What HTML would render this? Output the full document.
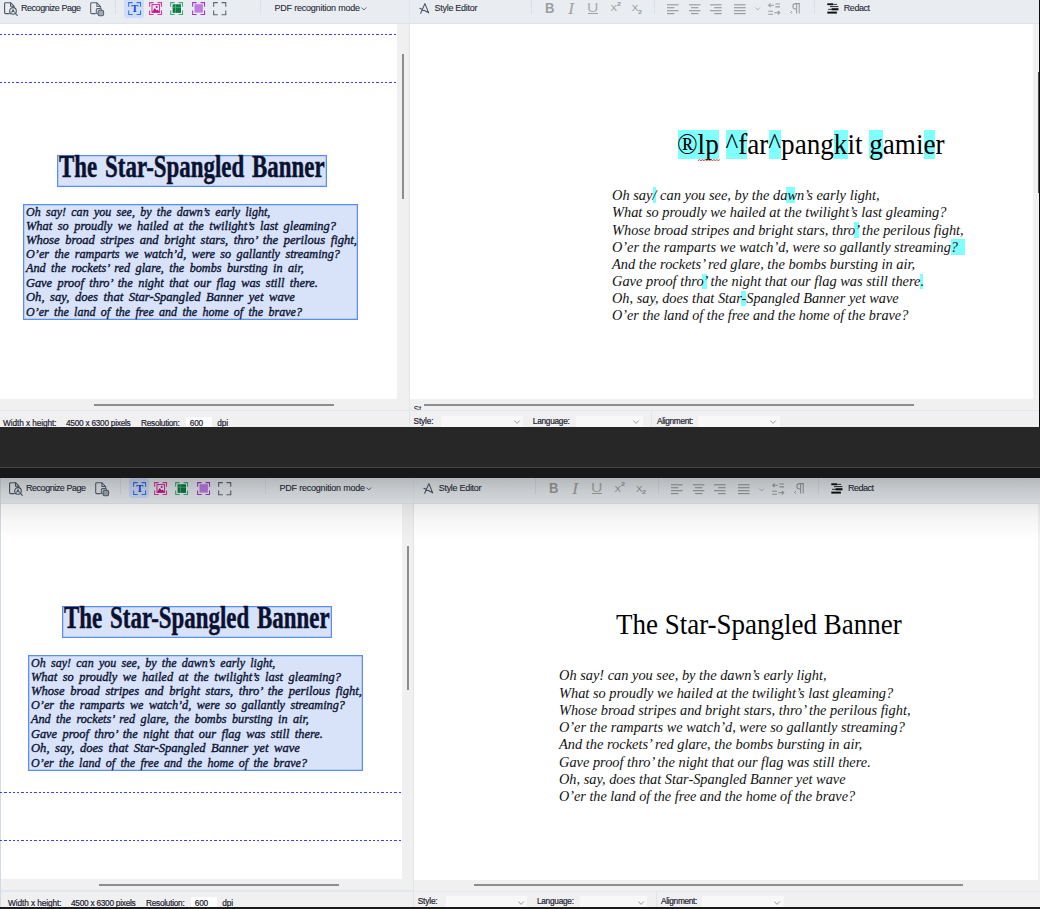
<!DOCTYPE html>
<html lang="en"><head><meta charset="utf-8"><title>OCR Editor</title>
<style>
html,body{margin:0;padding:0}
body{width:1040px;height:909px;position:relative;overflow:hidden;background:#272727;
 font-family:"Liberation Sans",sans-serif}
div,span.t,svg{position:absolute}
svg{overflow:visible;display:block}
.win{overflow:hidden;left:0;width:1040px}
.app{left:0;top:0}
.t{white-space:nowrap;line-height:1;display:block;transform-origin:0 0}
.sans{font-family:"Liberation Sans",sans-serif}
.serif{font-family:"Liberation Serif",serif}
.area{background:#d8e3fa;box-shadow:inset 0 0 0 1.25px #5b8ef0;box-sizing:border-box}
</style></head>
<body>
<div class="win" style="top:0;height:427px;width:1039px">
<div class="app" style="left:0;top:0">
<div style="left:-5px;top:22px;width:402px;height:376.5px;background:#fff;"></div>
<div style="left:397px;top:22px;width:11.7px;height:376.5px;background:#f0f0f0;"></div>
<div style="left:402px;top:54px;width:2.1px;height:144.8px;background:#8d8d8d;"></div>
<div style="left:409.9px;top:22px;width:623.1px;height:377px;background:#fff;"></div>
<div style="left:1033px;top:22px;width:12px;height:377px;background:#f1f1f1;"></div>
<div style="left:-5px;top:398.5px;width:402px;height:30px;background:#f0f0f0;"></div>
<div style="left:397px;top:398.5px;width:12px;height:30px;background:#f0f0f0;"></div>
<div style="left:409.5px;top:399px;width:640px;height:30px;background:#f0f0f0;"></div>
<div style="left:-5px;top:-3px;width:1050px;height:26.4px;background:#e9edf1;"></div>
<div style="left:-5px;top:23.2px;width:1050px;height:1.1px;background:#dfe4ea;"></div>
<div style="left:408.5px;top:-3px;width:1.45px;height:432px;background:#e0e6ed;"></div>
<div style="left:-5px;top:409.9px;width:413.5px;height:1.2px;background:#e2e7ee;"></div>
<div style="left:409.5px;top:410.3px;width:631px;height:1.2px;background:#e2e7ee;"></div>
<div style="left:-5px;top:-3px;width:1.3px;height:432px;background:#d2dae3;"></div>
<div style="left:93.8px;top:403.8px;width:240.2px;height:2px;background:#8d8d8d;"></div>
<div style="left:424.4px;top:403.6px;width:489.4px;height:2px;background:#8d8d8d;"></div>
<div style="left:0;top:0px;width:0;height:0">
<div style="left:124.1px;top:-1.9px;width:19.9px;height:19.9px;background:#cfddf9;border-radius:3.2px;"></div>
<svg style="left:4px;top:1.9px" width="14.5" height="14" viewBox="0 0 14.5 14" fill="none"><g stroke="#4d5766" stroke-width="1.1" stroke-linecap="round" stroke-linejoin="round"><path d="M5.2 11.6H1.6a1 1 0 0 1-1-1V1.7a1 1 0 0 1 1-1h5L10 4.1v1.3"/><path d="M6.5 .9V4.2H9.8"/><circle cx="9" cy="8.9" r="3.3"/><path d="M11.4 11.4L13.3 13.3"/><path d="M7.7 10.4 9 7.4l1.3 3M8.2 9.5h1.6" stroke-width=".9"/></g></svg>
<svg style="left:90px;top:1.5px" width="14.5" height="15" viewBox="0 0 14.5 15" fill="none"><g stroke="#566070" stroke-width="1.05" stroke-linecap="round" stroke-linejoin="round"><path d="M5.4 11.6H1.7a1 1 0 0 1-1-1V1.7a1 1 0 0 1 1-1h5L10.6 4.6v1.4"/><path d="M6.9 .9V4.5H10.3"/><rect x="6.3" y="6.6" width="5.3" height="5.2" rx="1.3"/><rect x="8.1" y="8.2" width="5.5" height="5.6" rx="1.6" fill="#a3aab4"/></g></svg>
<svg style="left:127.5px;top:2px" width="13.4" height="13.4" viewBox="0 0 13.4 13.4" fill="none"><path d="M0.65 4.65 V0.65 H4.65 M8.55 0.65 H12.55 V4.65 M12.55 8.55 V12.55 H8.55 M4.65 12.55 H0.65 V8.55" stroke="#3572ea" stroke-width="1.05"/><text x="6.7" y="10.4" text-anchor="middle" font-family="Liberation Serif,serif" font-weight="bold" font-size="10.5" fill="#0f45dc">T</text></svg>
<svg style="left:148.8px;top:2px" width="13.4" height="13.4" viewBox="0 0 13.4 13.4" fill="none"><path d="M0.65 4.65 V0.65 H4.65 M8.55 0.65 H12.55 V4.65 M12.55 8.55 V12.55 H8.55 M4.65 12.55 H0.65 V8.55" stroke="#d5389f" stroke-width="1.05"/><rect x="3" y="2.6" width="7.6" height="7.8" stroke="#cf2499" stroke-width="1"/><path d="M3 10.2 5.7 6l2 2.6 1.1-1.1 1.8 2.7z" fill="#c90f94"/><circle cx="7.7" cy="4.9" r="1" fill="#c90f94"/></svg>
<svg style="left:170.3px;top:2px" width="13.4" height="13.4" viewBox="0 0 13.4 13.4" fill="none"><path d="M0.65 4.65 V0.65 H4.65 M8.55 0.65 H12.55 V4.65 M12.55 8.55 V12.55 H8.55 M4.65 12.55 H0.65 V8.55" stroke="#45a97f" stroke-width="1.05"/><rect x="2.6" y="2.3" width="8.4" height="8.6" fill="#0c7b45"/><path d="M5.4 2.3v8.6M2.6 5.3h8.4" stroke="#5fb58e" stroke-width=".8"/></svg>
<svg style="left:191.9px;top:2px" width="13.4" height="13.4" viewBox="0 0 13.4 13.4" fill="none"><path d="M0.65 4.65 V0.65 H4.65 M8.55 0.65 H12.55 V4.65 M12.55 8.55 V12.55 H8.55 M4.65 12.55 H0.65 V8.55" stroke="#a233d3" stroke-width="1.05"/><rect x="2.5" y="2.2" width="8.4" height="8.4" fill="#bf7ce2"/></svg>
<svg style="left:212.9px;top:2px" width="13.6" height="13.4" viewBox="0 0 13.6 13.4" fill="none"><path d="M0.65 4.8500000000000005 V0.65 H4.8500000000000005 M8.55 0.65 H12.75 V4.8500000000000005 M12.75 8.55 V12.75 H8.55 M4.8500000000000005 12.75 H0.65 V8.55" stroke="#5d6573" stroke-width="1.1"/></svg>
<span id="arp" class="t sans" style="left:21px;top:3.53px;font-size:9px;letter-spacing:-0.46px;color:#282a38;-webkit-text-stroke:.1px #282a38;">Recognize Page</span>
<span id="apm" class="t sans" style="left:274.5px;top:3.53px;font-size:9px;letter-spacing:-0.21px;color:#282a38;-webkit-text-stroke:.1px #282a38;">PDF recognition mode</span>
<svg style="left:360.6px;top:7.3px" width="5.6" height="4" viewBox="0 0 5.6 4" fill="none"><path d="M.4 .5 2.8 3 5.2 .5" stroke="#4d5766" stroke-width=".9"/></svg>
<div style="left:115px;top:-3px;width:1px;height:17px;background:#d9dfe8;"></div>
<div style="left:260px;top:-3px;width:1px;height:16.6px;background:#dde2ea;"></div>
</div>
<div style="left:0px;top:0px;width:0;height:0">
<svg style="left:418.5px;top:3px" width="11" height="12" viewBox="0 0 11 12" fill="none"><g stroke="#465060" stroke-width="1.05" stroke-linecap="round" stroke-linejoin="round"><path d="M1.7 10.2 5.9 .6 9.7 9.9M.9 5.2 9.3 9.5"/></g></svg>
<svg style="left:667.3px;top:3.5px" width="12" height="10.5" viewBox="0 0 12 10.5" fill="none"><g stroke="#9b9b9b" stroke-width="1.15"><path d="M0 0.8H11.6"/><path d="M0 3.7H7.4"/><path d="M0 6.7H11.6"/><path d="M0 9.6H7.4"/></g></svg>
<svg style="left:689px;top:3.5px" width="12" height="10.5" viewBox="0 0 12 10.5" fill="none"><g stroke="#9b9b9b" stroke-width="1.15"><path d="M0 0.8H11.4"/><path d="M2 3.7H9.4"/><path d="M0 6.7H11.4"/><path d="M2 9.6H9.4"/></g></svg>
<svg style="left:710.2px;top:3.5px" width="12" height="10.5" viewBox="0 0 12 10.5" fill="none"><g stroke="#9b9b9b" stroke-width="1.15"><path d="M0 0.8H11.6"/><path d="M4.2 3.7H11.6"/><path d="M0 6.7H11.6"/><path d="M4.2 9.6H11.6"/></g></svg>
<svg style="left:733.8px;top:3.5px" width="12" height="10.5" viewBox="0 0 12 10.5" fill="none"><g stroke="#9b9b9b" stroke-width="1.15"><path d="M0 0.8H11.6"/><path d="M0 3.7H11.6"/><path d="M0 6.7H11.6"/><path d="M0 9.6H11.6"/></g></svg>
<svg style="left:755.2px;top:7.4px" width="5.4" height="4" viewBox="0 0 5.4 4" fill="none"><path d="M.4 .5 2.7 3 5 .5" stroke="#a9aeb5" stroke-width=".9"/></svg>
<svg style="left:767.8px;top:2.6px" width="12.4" height="12.6" viewBox="0 0 12.4 12.6" fill="none"><g stroke="#9b9b9b" stroke-width="1.05"><path d="M.6 2.2H6M2.6 .3.7 2.2 2.6 4.1M7.4 1H12M7.4 3.9H12"/><path d="M.2 8.3H5M.2 11.2H5M6.2 9.8H11.8M9.8 7.9 11.8 9.8 9.8 11.7"/></g></svg>
<svg style="left:790.2px;top:2.6px" width="10.6" height="12" viewBox="0 0 10.6 12" fill="none"><g stroke="#9b9b9b" stroke-width="1.05" stroke-linejoin="round"><path d="M9.9 .6H5.6a2.7 2.7 0 0 0 0 5.4H6.4M6.6 .6V10.6M9.2 .6V10.6"/><path d="M2 8 .6 9.4 2 10.8" stroke-width=".9"/></g></svg>
<svg style="left:827.2px;top:3.2px" width="12" height="11" viewBox="0 0 12 11" fill="none"><g fill="#111"><rect x=".3" y=".3" width="5.8" height="1.9"/><rect x="6.1" y=".9" width="4" height=".8"/><rect x="3" y="3.2" width="8.4" height=".9"/><rect x="1" y="5.9" width="4" height=".8"/><rect x="4.6" y="5.2" width="6.9" height="2.1"/><rect x=".3" y="8.6" width="9.6" height="2"/></g></svg>
<span id="ase" class="t sans" style="left:434.6px;top:3.53px;font-size:9px;letter-spacing:-0.29px;color:#282a38;-webkit-text-stroke:.1px #282a38;">Style Editor</span>
<span id="ard" class="t sans" style="left:843.8px;top:3.53px;font-size:9px;letter-spacing:-0.46px;color:#282a38;-webkit-text-stroke:.1px #282a38;">Redact</span>
<div style="left:530.6px;top:-3px;width:1px;height:16.8px;background:#d9dfe8;"></div>
<div style="left:654.2px;top:-3px;width:1px;height:16.8px;background:#d9dfe8;"></div>
<div style="left:813.6px;top:-3px;width:1px;height:16.8px;background:#d9dfe8;"></div>
<span id="afb" class="t sans" style="left:545.2px;top:1.35px;font-size:14px;color:#9e9e9e;font-weight:bold;transform:scaleX(.93);">B</span>
<span id="afi" class="t serif" style="left:567.6px;top:0.8px;font-size:16px;color:#a4a4a4;font-style:italic;transform:scaleX(1.15);">I</span>
<span id="afu" class="t sans" style="left:587.3px;top:2.07px;font-size:12.2px;color:#adadad;transform:scaleX(1.3);">U</span>
<div style="left:588.2px;top:13px;width:9.8px;height:1px;background:#a3a3a3;"></div>
<span id="afx" class="t sans" style="left:610.4px;top:3.42px;font-size:9.9px;color:#9b9b9b;">X</span>
<span id="af2" class="t sans" style="left:616.5px;top:2.13px;font-size:5.4px;color:#9b9b9b;font-weight:bold;transform:scaleX(1.35);">2</span>
<span id="afy" class="t sans" style="left:631.8px;top:3.42px;font-size:9.9px;color:#9b9b9b;">X</span>
<span id="af3" class="t sans" style="left:637.8px;top:9.53px;font-size:5.4px;color:#9b9b9b;font-weight:bold;transform:scaleX(1.35);">2</span>
</div>
<span id="as1" class="t sans" style="left:3px;top:419.17px;font-size:8.3px;letter-spacing:-0.09px;color:#1d2233;-webkit-text-stroke:.2px #1d2233;">Width x height:</span>
<span id="as2" class="t sans" style="left:66px;top:419.17px;font-size:8.3px;letter-spacing:-0.26px;color:#1d2233;-webkit-text-stroke:.2px #1d2233;">4500 x 6300 pixels</span>
<span id="as3" class="t sans" style="left:141px;top:419.17px;font-size:8.3px;letter-spacing:-0.28px;color:#1d2233;-webkit-text-stroke:.2px #1d2233;">Resolution:</span>
<div style="left:186px;top:416.9px;width:26.2px;height:12px;background:#fdfdfd;"></div>
<span id="as4" class="t sans" style="left:189.8px;top:419.17px;font-size:8.3px;letter-spacing:-0.28px;color:#1d2233;-webkit-text-stroke:.2px #1d2233;">600</span>
<span id="as5" class="t sans" style="left:217.3px;top:419.17px;font-size:8.3px;letter-spacing:-0.16px;color:#1d2233;-webkit-text-stroke:.2px #1d2233;">dpi</span>
<div style="left:0px;top:0;width:0;height:0">
<div style="left:412px;top:403px;width:12px;height:7.4px;overflow:hidden;"><span class="t sans" style="left:1.4px;top:1.6px;font-size:8.6px;color:#1d2233">St</span></div>
<span id="as6" class="t sans" style="left:413.6px;top:416.67px;font-size:8.3px;letter-spacing:-0.16px;color:#1d2233;-webkit-text-stroke:.2px #1d2233;">Style:</span>
<span id="as7" class="t sans" style="left:532.8px;top:416.67px;font-size:8.3px;letter-spacing:-0.27px;color:#1d2233;-webkit-text-stroke:.2px #1d2233;">Language:</span>
<span id="as8" class="t sans" style="left:657px;top:416.67px;font-size:8.3px;letter-spacing:-0.33px;color:#1d2233;-webkit-text-stroke:.2px #1d2233;">Alignment:</span>
<div style="left:441.4px;top:415.5px;width:81.9px;height:13px;background:#f8f8f8;"></div>
<svg style="left:513.7px;top:420.4px" width="6.2" height="4" viewBox="0 0 6.2 4" fill="none"><path d="M.4 .5 3.1 3.4 5.8 .5" stroke="#8e949c" stroke-width=".9"/></svg>
<div style="left:576px;top:415.5px;width:67px;height:13px;background:#f8f8f8;"></div>
<svg style="left:633.4px;top:420.4px" width="6.2" height="4" viewBox="0 0 6.2 4" fill="none"><path d="M.4 .5 3.1 3.4 5.8 .5" stroke="#8e949c" stroke-width=".9"/></svg>
<div style="left:697.6px;top:415.5px;width:82.1px;height:13px;background:#f8f8f8;"></div>
<svg style="left:770.1px;top:420.4px" width="6.2" height="4" viewBox="0 0 6.2 4" fill="none"><path d="M.4 .5 3.1 3.4 5.8 .5" stroke="#8e949c" stroke-width=".9"/></svg>
<div style="left:651.4px;top:411.5px;width:1px;height:18px;background:#dfe5ec;"></div>
</div>
<div style="left:-5px;top:34px;width:401.5px;height:1.1px;background:repeating-linear-gradient(90deg,#3d3dff 0,#3d3dff 2.3px,transparent 2.3px,transparent 4.286px);"></div>
<div style="left:-5px;top:81.6px;width:401.5px;height:1.1px;background:repeating-linear-gradient(90deg,#3d3dff 0,#3d3dff 2.3px,transparent 2.3px,transparent 4.286px);"></div>
<div class="area" style="left:57.3px;top:154.5px;width:269.4px;height:32.9px;"></div>
<div class="area" style="left:23.3px;top:204.4px;width:334.6px;height:115.9px;"></div>
<span id="ait" class="t serif" style="left:59px;top:150.74px;font-size:31.6px;transform:scaleX(0.7248);font-weight:bold;color:#0b1130;-webkit-text-stroke:.5px #0b1130;word-spacing:3px;">The Star-Spangled Banner</span>
<span id="ai0" class="t serif" style="left:25.7px;top:204.79px;font-size:13.5px;transform:scaleX(0.8892);font-style:italic;color:#0d1434;-webkit-text-stroke:.4px #0d1434;word-spacing:2.6px;">Oh say! can you see, by the dawn’s early light,</span>
<span id="ai1" class="t serif" style="left:25.7px;top:218.99px;font-size:13.5px;transform:scaleX(0.9188);font-style:italic;color:#0d1434;-webkit-text-stroke:.4px #0d1434;word-spacing:2.6px;">What so proudly we hailed at the twilight’s last gleaming?</span>
<span id="ai2" class="t serif" style="left:25.7px;top:232.99px;font-size:13.5px;transform:scaleX(0.9340);font-style:italic;color:#0d1434;-webkit-text-stroke:.4px #0d1434;word-spacing:2.6px;">Whose broad stripes and bright stars, thro’ the perilous fight,</span>
<span id="ai3" class="t serif" style="left:25.7px;top:247.49px;font-size:13.5px;transform:scaleX(0.9042);font-style:italic;color:#0d1434;-webkit-text-stroke:.4px #0d1434;word-spacing:2.6px;">O’er the ramparts we watch’d, were so gallantly streaming?</span>
<span id="ai4" class="t serif" style="left:25.7px;top:261.49px;font-size:13.5px;transform:scaleX(0.9045);font-style:italic;color:#0d1434;-webkit-text-stroke:.4px #0d1434;word-spacing:2.6px;">And the rockets’ red glare, the bombs bursting in air,</span>
<span id="ai5" class="t serif" style="left:25.7px;top:276.09px;font-size:13.5px;transform:scaleX(0.9154);font-style:italic;color:#0d1434;-webkit-text-stroke:.4px #0d1434;word-spacing:2.6px;">Gave proof thro’ the night that our flag was still there.</span>
<span id="ai6" class="t serif" style="left:25.7px;top:290.39px;font-size:13.5px;transform:scaleX(0.9328);font-style:italic;color:#0d1434;-webkit-text-stroke:.4px #0d1434;word-spacing:2.6px;">Oh, say, does that Star-Spangled Banner yet wave</span>
<span id="ai7" class="t serif" style="left:25.7px;top:304.59px;font-size:13.5px;transform:scaleX(0.8910);font-style:italic;color:#0d1434;-webkit-text-stroke:.4px #0d1434;word-spacing:2.6px;">O’er the land of the free and the home of the brave?</span>
<div style="left:677.5px;top:129.8px;width:41.5px;height:29.4px;background:#80ffff;"></div>
<div style="left:726px;top:129.8px;width:21.2px;height:29.4px;background:#80ffff;"></div>
<div style="left:768.8px;top:129.8px;width:12.6px;height:29.4px;background:#80ffff;"></div>
<div style="left:834.2px;top:129.8px;width:13.8px;height:29.4px;background:#80ffff;"></div>
<div style="left:869.4px;top:129.8px;width:13.4px;height:29.4px;background:#80ffff;"></div>
<div style="left:924.2px;top:129.8px;width:11.3px;height:29.4px;background:#80ffff;"></div>
<div style="left:652.5px;top:187.3px;width:3.8px;height:16.1px;background:#80ffff;"></div>
<div style="left:786px;top:187.3px;width:9.1px;height:16.1px;background:#80ffff;"></div>
<div style="left:854.4px;top:222px;width:4.4px;height:15.8px;background:#80ffff;"></div>
<div style="left:950.8px;top:239.2px;width:14.2px;height:15.8px;background:#80ffff;"></div>
<div style="left:702px;top:273.8px;width:4.7px;height:15.5px;background:#80ffff;"></div>
<div style="left:919.8px;top:273.8px;width:3.5px;height:15.5px;background:#80ffff;"></div>
<div style="left:741px;top:291px;width:4.6px;height:15.4px;background:#80ffff;"></div>
<span id="art" class="t serif" style="left:677.4px;top:130.75px;font-size:28.6px;transform:scaleX(0.9489);color:#000;">®lp ^far^pangkit gamier</span>
<svg style="left:697.8px;top:158.9px" width="22" height="2.4" viewBox="0 0 22 2.4" fill="none"><path d="M0 1.95 1.45 0.35 2.9 1.95 4.35 0.35 5.8 1.95 7.25 0.35 8.7 1.95 10.15 0.35 11.6 1.95 13.05 0.35 14.5 1.95 15.95 0.35 17.4 1.95 18.85 0.35 20.3 1.95 21.75 0.35" stroke="#fa2d2d" stroke-width=".95" stroke-linejoin="round"/></svg>
<span id="ar0" class="t serif" style="left:611.6px;top:188.04px;font-size:15px;transform:scaleX(0.9614);font-style:italic;color:#111;">Oh say/ can you see, by the dawn’s early light,</span>
<span id="ar1" class="t serif" style="left:611.6px;top:205.34px;font-size:15px;transform:scaleX(0.9589);font-style:italic;color:#111;">What so proudly we hailed at the twilight’s last gleaming?</span>
<span id="ar2" class="t serif" style="left:611.6px;top:222.64px;font-size:15px;transform:scaleX(0.9566);font-style:italic;color:#111;">Whose broad stripes and bright stars, thro’ the perilous fight,</span>
<span id="ar3" class="t serif" style="left:611.6px;top:239.74px;font-size:15px;transform:scaleX(0.9542);font-style:italic;color:#111;">O’er the ramparts we watch’d, were so gallantly streaming?</span>
<span id="ar4" class="t serif" style="left:611.6px;top:257.04px;font-size:15px;transform:scaleX(0.9613);font-style:italic;color:#111;">And the rockets’ red glare, the bombs bursting in air,</span>
<span id="ar5" class="t serif" style="left:611.6px;top:274.44px;font-size:15px;transform:scaleX(0.9588);font-style:italic;color:#111;">Gave proof thro’ the night that our flag was still there.</span>
<span id="ar6" class="t serif" style="left:611.6px;top:291.34px;font-size:15px;transform:scaleX(0.9554);font-style:italic;color:#111;">Oh, say, does that Star-Spangled Banner yet wave</span>
<span id="ar7" class="t serif" style="left:611.6px;top:308.24px;font-size:15px;transform:scaleX(0.9488);font-style:italic;color:#111;">O’er the land of the free and the home of the brave?</span>
<div style="left:1038px;top:72px;width:1.2px;height:121px;background:#505050;"></div>
</div></div>
<div style="left:1038.9px;top:0px;width:1.2px;height:427px;background:#0c0c0c;"></div>
<div style="left:0px;top:427px;width:1040px;height:40px;background:#272727;"></div>
<div style="left:0px;top:466.8px;width:1040px;height:1.2px;background:#454545;"></div>
<div style="left:0px;top:468px;width:1040px;height:9.5px;background:#181818;"></div>
<div class="win" style="top:477.5px;height:429px">
<div class="app" style="left:5px;top:3px">
<div style="left:-5px;top:22px;width:402px;height:376.5px;background:#fff;"></div>
<div style="left:397px;top:22px;width:11.1px;height:376.5px;background:#f0f0f0;"></div>
<div style="left:402px;top:65.3px;width:2.1px;height:144.2px;background:#8d8d8d;"></div>
<div style="left:409.3px;top:22px;width:623.7px;height:377px;background:#fff;"></div>
<div style="left:1033px;top:22px;width:12px;height:377px;background:#f1f1f1;"></div>
<div style="left:-5px;top:398.5px;width:402px;height:30px;background:#f0f0f0;"></div>
<div style="left:397px;top:398.5px;width:12px;height:30px;background:#f0f0f0;"></div>
<div style="left:408.9px;top:399px;width:640px;height:30px;background:#f0f0f0;"></div>
<div style="left:-5px;top:-3px;width:1050px;height:26px;background:#e9edf1;"></div>
<div style="left:-5px;top:22.8px;width:1050px;height:1.1px;background:#dfe4ea;"></div>
<div style="left:407.9px;top:-3px;width:1.45px;height:432px;background:#e0e6ed;"></div>
<div style="left:-5px;top:409.9px;width:412.9px;height:1.2px;background:#e2e7ee;"></div>
<div style="left:408.9px;top:410.3px;width:631px;height:1.2px;background:#e2e7ee;"></div>
<div style="left:-5px;top:-3px;width:1.3px;height:432px;background:#d2dae3;"></div>
<div style="left:93.8px;top:403.8px;width:240.2px;height:2px;background:#8d8d8d;"></div>
<div style="left:469px;top:403.6px;width:489px;height:2px;background:#8d8d8d;"></div>
<div style="left:0;top:-0.4px;width:0;height:0">
<div style="left:124.1px;top:-1.9px;width:19.9px;height:19.9px;background:#cfddf9;border-radius:3.2px;"></div>
<svg style="left:4px;top:1.9px" width="14.5" height="14" viewBox="0 0 14.5 14" fill="none"><g stroke="#4d5766" stroke-width="1.1" stroke-linecap="round" stroke-linejoin="round"><path d="M5.2 11.6H1.6a1 1 0 0 1-1-1V1.7a1 1 0 0 1 1-1h5L10 4.1v1.3"/><path d="M6.5 .9V4.2H9.8"/><circle cx="9" cy="8.9" r="3.3"/><path d="M11.4 11.4L13.3 13.3"/><path d="M7.7 10.4 9 7.4l1.3 3M8.2 9.5h1.6" stroke-width=".9"/></g></svg>
<svg style="left:90px;top:1.5px" width="14.5" height="15" viewBox="0 0 14.5 15" fill="none"><g stroke="#566070" stroke-width="1.05" stroke-linecap="round" stroke-linejoin="round"><path d="M5.4 11.6H1.7a1 1 0 0 1-1-1V1.7a1 1 0 0 1 1-1h5L10.6 4.6v1.4"/><path d="M6.9 .9V4.5H10.3"/><rect x="6.3" y="6.6" width="5.3" height="5.2" rx="1.3"/><rect x="8.1" y="8.2" width="5.5" height="5.6" rx="1.6" fill="#a3aab4"/></g></svg>
<svg style="left:127.5px;top:2px" width="13.4" height="13.4" viewBox="0 0 13.4 13.4" fill="none"><path d="M0.65 4.65 V0.65 H4.65 M8.55 0.65 H12.55 V4.65 M12.55 8.55 V12.55 H8.55 M4.65 12.55 H0.65 V8.55" stroke="#3572ea" stroke-width="1.05"/><text x="6.7" y="10.4" text-anchor="middle" font-family="Liberation Serif,serif" font-weight="bold" font-size="10.5" fill="#0f45dc">T</text></svg>
<svg style="left:148.8px;top:2px" width="13.4" height="13.4" viewBox="0 0 13.4 13.4" fill="none"><path d="M0.65 4.65 V0.65 H4.65 M8.55 0.65 H12.55 V4.65 M12.55 8.55 V12.55 H8.55 M4.65 12.55 H0.65 V8.55" stroke="#d5389f" stroke-width="1.05"/><rect x="3" y="2.6" width="7.6" height="7.8" stroke="#cf2499" stroke-width="1"/><path d="M3 10.2 5.7 6l2 2.6 1.1-1.1 1.8 2.7z" fill="#c90f94"/><circle cx="7.7" cy="4.9" r="1" fill="#c90f94"/></svg>
<svg style="left:170.3px;top:2px" width="13.4" height="13.4" viewBox="0 0 13.4 13.4" fill="none"><path d="M0.65 4.65 V0.65 H4.65 M8.55 0.65 H12.55 V4.65 M12.55 8.55 V12.55 H8.55 M4.65 12.55 H0.65 V8.55" stroke="#45a97f" stroke-width="1.05"/><rect x="2.6" y="2.3" width="8.4" height="8.6" fill="#0c7b45"/><path d="M5.4 2.3v8.6M2.6 5.3h8.4" stroke="#5fb58e" stroke-width=".8"/></svg>
<svg style="left:191.9px;top:2px" width="13.4" height="13.4" viewBox="0 0 13.4 13.4" fill="none"><path d="M0.65 4.65 V0.65 H4.65 M8.55 0.65 H12.55 V4.65 M12.55 8.55 V12.55 H8.55 M4.65 12.55 H0.65 V8.55" stroke="#a233d3" stroke-width="1.05"/><rect x="2.5" y="2.2" width="8.4" height="8.4" fill="#bf7ce2"/></svg>
<svg style="left:212.9px;top:2px" width="13.6" height="13.4" viewBox="0 0 13.6 13.4" fill="none"><path d="M0.65 4.8500000000000005 V0.65 H4.8500000000000005 M8.55 0.65 H12.75 V4.8500000000000005 M12.75 8.55 V12.75 H8.55 M4.8500000000000005 12.75 H0.65 V8.55" stroke="#5d6573" stroke-width="1.1"/></svg>
<span id="brp" class="t sans" style="left:21px;top:3.93px;font-size:9px;letter-spacing:-0.46px;color:#282a38;-webkit-text-stroke:.1px #282a38;">Recognize Page</span>
<span id="bpm" class="t sans" style="left:274.5px;top:3.93px;font-size:9px;letter-spacing:-0.21px;color:#282a38;-webkit-text-stroke:.1px #282a38;">PDF recognition mode</span>
<svg style="left:360.6px;top:7.3px" width="5.6" height="4" viewBox="0 0 5.6 4" fill="none"><path d="M.4 .5 2.8 3 5.2 .5" stroke="#4d5766" stroke-width=".9"/></svg>
<div style="left:115px;top:-3px;width:1px;height:17px;background:#d9dfe8;"></div>
<div style="left:260px;top:-3px;width:1px;height:16.6px;background:#dde2ea;"></div>
</div>
<div style="left:-0.9px;top:-0.4px;width:0;height:0">
<svg style="left:418.5px;top:3px" width="11" height="12" viewBox="0 0 11 12" fill="none"><g stroke="#465060" stroke-width="1.05" stroke-linecap="round" stroke-linejoin="round"><path d="M1.7 10.2 5.9 .6 9.7 9.9M.9 5.2 9.3 9.5"/></g></svg>
<svg style="left:667.3px;top:3.5px" width="12" height="10.5" viewBox="0 0 12 10.5" fill="none"><g stroke="#9b9b9b" stroke-width="1.15"><path d="M0 0.8H11.6"/><path d="M0 3.7H7.4"/><path d="M0 6.7H11.6"/><path d="M0 9.6H7.4"/></g></svg>
<svg style="left:689px;top:3.5px" width="12" height="10.5" viewBox="0 0 12 10.5" fill="none"><g stroke="#9b9b9b" stroke-width="1.15"><path d="M0 0.8H11.4"/><path d="M2 3.7H9.4"/><path d="M0 6.7H11.4"/><path d="M2 9.6H9.4"/></g></svg>
<svg style="left:710.2px;top:3.5px" width="12" height="10.5" viewBox="0 0 12 10.5" fill="none"><g stroke="#9b9b9b" stroke-width="1.15"><path d="M0 0.8H11.6"/><path d="M4.2 3.7H11.6"/><path d="M0 6.7H11.6"/><path d="M4.2 9.6H11.6"/></g></svg>
<svg style="left:733.8px;top:3.5px" width="12" height="10.5" viewBox="0 0 12 10.5" fill="none"><g stroke="#9b9b9b" stroke-width="1.15"><path d="M0 0.8H11.6"/><path d="M0 3.7H11.6"/><path d="M0 6.7H11.6"/><path d="M0 9.6H11.6"/></g></svg>
<svg style="left:755.2px;top:7.4px" width="5.4" height="4" viewBox="0 0 5.4 4" fill="none"><path d="M.4 .5 2.7 3 5 .5" stroke="#a9aeb5" stroke-width=".9"/></svg>
<svg style="left:767.8px;top:2.6px" width="12.4" height="12.6" viewBox="0 0 12.4 12.6" fill="none"><g stroke="#9b9b9b" stroke-width="1.05"><path d="M.6 2.2H6M2.6 .3.7 2.2 2.6 4.1M7.4 1H12M7.4 3.9H12"/><path d="M.2 8.3H5M.2 11.2H5M6.2 9.8H11.8M9.8 7.9 11.8 9.8 9.8 11.7"/></g></svg>
<svg style="left:790.2px;top:2.6px" width="10.6" height="12" viewBox="0 0 10.6 12" fill="none"><g stroke="#9b9b9b" stroke-width="1.05" stroke-linejoin="round"><path d="M9.9 .6H5.6a2.7 2.7 0 0 0 0 5.4H6.4M6.6 .6V10.6M9.2 .6V10.6"/><path d="M2 8 .6 9.4 2 10.8" stroke-width=".9"/></g></svg>
<svg style="left:827.2px;top:3.2px" width="12" height="11" viewBox="0 0 12 11" fill="none"><g fill="#111"><rect x=".3" y=".3" width="5.8" height="1.9"/><rect x="6.1" y=".9" width="4" height=".8"/><rect x="3" y="3.2" width="8.4" height=".9"/><rect x="1" y="5.9" width="4" height=".8"/><rect x="4.6" y="5.2" width="6.9" height="2.1"/><rect x=".3" y="8.6" width="9.6" height="2"/></g></svg>
<span id="bse" class="t sans" style="left:434.6px;top:3.93px;font-size:9px;letter-spacing:-0.29px;color:#282a38;-webkit-text-stroke:.1px #282a38;">Style Editor</span>
<span id="brd" class="t sans" style="left:843.8px;top:3.93px;font-size:9px;letter-spacing:-0.46px;color:#282a38;-webkit-text-stroke:.1px #282a38;">Redact</span>
<div style="left:530.6px;top:-3px;width:1px;height:16.8px;background:#d9dfe8;"></div>
<div style="left:654.2px;top:-3px;width:1px;height:16.8px;background:#d9dfe8;"></div>
<div style="left:813.6px;top:-3px;width:1px;height:16.8px;background:#d9dfe8;"></div>
<span id="bfb" class="t sans" style="left:545.2px;top:1.35px;font-size:14px;color:#9e9e9e;font-weight:bold;transform:scaleX(.93);">B</span>
<span id="bfi" class="t serif" style="left:567.6px;top:0.8px;font-size:16px;color:#a4a4a4;font-style:italic;transform:scaleX(1.15);">I</span>
<span id="bfu" class="t sans" style="left:587.3px;top:2.07px;font-size:12.2px;color:#adadad;transform:scaleX(1.3);">U</span>
<div style="left:588.2px;top:13px;width:9.8px;height:1px;background:#a3a3a3;"></div>
<span id="bfx" class="t sans" style="left:610.4px;top:3.42px;font-size:9.9px;color:#9b9b9b;">X</span>
<span id="bf2" class="t sans" style="left:616.5px;top:2.13px;font-size:5.4px;color:#9b9b9b;font-weight:bold;transform:scaleX(1.35);">2</span>
<span id="bfy" class="t sans" style="left:631.8px;top:3.42px;font-size:9.9px;color:#9b9b9b;">X</span>
<span id="bf3" class="t sans" style="left:637.8px;top:9.53px;font-size:5.4px;color:#9b9b9b;font-weight:bold;transform:scaleX(1.35);">2</span>
</div>
<span id="bs1" class="t sans" style="left:3px;top:418.37px;font-size:8.3px;letter-spacing:-0.09px;color:#1d2233;-webkit-text-stroke:.2px #1d2233;">Width x height:</span>
<span id="bs2" class="t sans" style="left:66px;top:418.37px;font-size:8.3px;letter-spacing:-0.26px;color:#1d2233;-webkit-text-stroke:.2px #1d2233;">4500 x 6300 pixels</span>
<span id="bs3" class="t sans" style="left:141px;top:418.37px;font-size:8.3px;letter-spacing:-0.28px;color:#1d2233;-webkit-text-stroke:.2px #1d2233;">Resolution:</span>
<div style="left:186px;top:416.9px;width:26.2px;height:12px;background:#fdfdfd;"></div>
<span id="bs4" class="t sans" style="left:189.8px;top:418.37px;font-size:8.3px;letter-spacing:-0.28px;color:#1d2233;-webkit-text-stroke:.2px #1d2233;">600</span>
<span id="bs5" class="t sans" style="left:217.3px;top:418.37px;font-size:8.3px;letter-spacing:-0.16px;color:#1d2233;-webkit-text-stroke:.2px #1d2233;">dpi</span>
<div style="left:-0.9px;top:0;width:0;height:0">
<span id="bs6" class="t sans" style="left:413.6px;top:416.67px;font-size:8.3px;letter-spacing:-0.16px;color:#1d2233;-webkit-text-stroke:.2px #1d2233;">Style:</span>
<span id="bs7" class="t sans" style="left:532.8px;top:416.67px;font-size:8.3px;letter-spacing:-0.27px;color:#1d2233;-webkit-text-stroke:.2px #1d2233;">Language:</span>
<span id="bs8" class="t sans" style="left:657px;top:416.67px;font-size:8.3px;letter-spacing:-0.33px;color:#1d2233;-webkit-text-stroke:.2px #1d2233;">Alignment:</span>
<div style="left:441.4px;top:415.5px;width:81.9px;height:13px;background:#f8f8f8;"></div>
<svg style="left:513.7px;top:420.4px" width="6.2" height="4" viewBox="0 0 6.2 4" fill="none"><path d="M.4 .5 3.1 3.4 5.8 .5" stroke="#8e949c" stroke-width=".9"/></svg>
<div style="left:576px;top:415.5px;width:67px;height:13px;background:#f8f8f8;"></div>
<svg style="left:633.4px;top:420.4px" width="6.2" height="4" viewBox="0 0 6.2 4" fill="none"><path d="M.4 .5 3.1 3.4 5.8 .5" stroke="#8e949c" stroke-width=".9"/></svg>
<div style="left:697.6px;top:415.5px;width:82.1px;height:13px;background:#f8f8f8;"></div>
<svg style="left:770.1px;top:420.4px" width="6.2" height="4" viewBox="0 0 6.2 4" fill="none"><path d="M.4 .5 3.1 3.4 5.8 .5" stroke="#8e949c" stroke-width=".9"/></svg>
<div style="left:651.4px;top:411.5px;width:1px;height:18px;background:#dfe5ec;"></div>
</div>
<div style="left:-5px;top:311.4px;width:401.5px;height:1.1px;background:repeating-linear-gradient(90deg,#3d3dff 0,#3d3dff 2.3px,transparent 2.3px,transparent 4.286px);"></div>
<div style="left:-5px;top:359.4px;width:401.5px;height:1.1px;background:repeating-linear-gradient(90deg,#3d3dff 0,#3d3dff 2.3px,transparent 2.3px,transparent 4.286px);"></div>
<div class="area" style="left:57.3px;top:125px;width:269.4px;height:32.9px;"></div>
<div class="area" style="left:23.3px;top:174.9px;width:334.6px;height:115.9px;"></div>
<span id="bit" class="t serif" style="left:59px;top:121.23px;font-size:31.6px;transform:scaleX(0.7248);font-weight:bold;color:#0b1130;-webkit-text-stroke:.5px #0b1130;word-spacing:3px;">The Star-Spangled Banner</span>
<span id="bi0" class="t serif" style="left:25.7px;top:175.29px;font-size:13.5px;transform:scaleX(0.8892);font-style:italic;color:#0d1434;-webkit-text-stroke:.4px #0d1434;word-spacing:2.6px;">Oh say! can you see, by the dawn’s early light,</span>
<span id="bi1" class="t serif" style="left:25.7px;top:189.49px;font-size:13.5px;transform:scaleX(0.9188);font-style:italic;color:#0d1434;-webkit-text-stroke:.4px #0d1434;word-spacing:2.6px;">What so proudly we hailed at the twilight’s last gleaming?</span>
<span id="bi2" class="t serif" style="left:25.7px;top:203.49px;font-size:13.5px;transform:scaleX(0.9340);font-style:italic;color:#0d1434;-webkit-text-stroke:.4px #0d1434;word-spacing:2.6px;">Whose broad stripes and bright stars, thro’ the perilous fight,</span>
<span id="bi3" class="t serif" style="left:25.7px;top:217.99px;font-size:13.5px;transform:scaleX(0.9042);font-style:italic;color:#0d1434;-webkit-text-stroke:.4px #0d1434;word-spacing:2.6px;">O’er the ramparts we watch’d, were so gallantly streaming?</span>
<span id="bi4" class="t serif" style="left:25.7px;top:231.99px;font-size:13.5px;transform:scaleX(0.9045);font-style:italic;color:#0d1434;-webkit-text-stroke:.4px #0d1434;word-spacing:2.6px;">And the rockets’ red glare, the bombs bursting in air,</span>
<span id="bi5" class="t serif" style="left:25.7px;top:246.59px;font-size:13.5px;transform:scaleX(0.9154);font-style:italic;color:#0d1434;-webkit-text-stroke:.4px #0d1434;word-spacing:2.6px;">Gave proof thro’ the night that our flag was still there.</span>
<span id="bi6" class="t serif" style="left:25.7px;top:260.89px;font-size:13.5px;transform:scaleX(0.9328);font-style:italic;color:#0d1434;-webkit-text-stroke:.4px #0d1434;word-spacing:2.6px;">Oh, say, does that Star-Spangled Banner yet wave</span>
<span id="bi7" class="t serif" style="left:25.7px;top:275.09px;font-size:13.5px;transform:scaleX(0.8910);font-style:italic;color:#0d1434;-webkit-text-stroke:.4px #0d1434;word-spacing:2.6px;">O’er the land of the free and the home of the brave?</span>
<span id="brt" class="t serif" style="left:611px;top:130.15px;font-size:28.6px;transform:scaleX(0.9434);color:#000;">The Star-Spangled Banner</span>
<span id="br0" class="t serif" style="left:554.2px;top:187.84px;font-size:15px;transform:scaleX(0.9579);font-style:italic;color:#111;">Oh say! can you see, by the dawn’s early light,</span>
<span id="br1" class="t serif" style="left:554.2px;top:205.14px;font-size:15px;transform:scaleX(0.9583);font-style:italic;color:#111;">What so proudly we hailed at the twilight’s last gleaming?</span>
<span id="br2" class="t serif" style="left:554.2px;top:222.44px;font-size:15px;transform:scaleX(0.9561);font-style:italic;color:#111;">Whose broad stripes and bright stars, thro’ the perilous fight,</span>
<span id="br3" class="t serif" style="left:554.2px;top:239.54px;font-size:15px;transform:scaleX(0.9536);font-style:italic;color:#111;">O’er the ramparts we watch’d, were so gallantly streaming?</span>
<span id="br4" class="t serif" style="left:554.2px;top:256.84px;font-size:15px;transform:scaleX(0.9607);font-style:italic;color:#111;">And the rockets’ red glare, the bombs bursting in air,</span>
<span id="br5" class="t serif" style="left:554.2px;top:274.24px;font-size:15px;transform:scaleX(0.9581);font-style:italic;color:#111;">Gave proof thro’ the night that our flag was still there.</span>
<span id="br6" class="t serif" style="left:554.2px;top:291.14px;font-size:15px;transform:scaleX(0.9548);font-style:italic;color:#111;">Oh, say, does that Star-Spangled Banner yet wave</span>
<span id="br7" class="t serif" style="left:554.2px;top:308.04px;font-size:15px;transform:scaleX(0.9481);font-style:italic;color:#111;">O’er the land of the free and the home of the brave?</span>
</div>
<div style="left:0px;top:0px;width:1040px;height:64px;background:linear-gradient(180deg,rgba(0,0,0,.225) 0,rgba(0,0,0,.15) 12px,rgba(0,0,0,.085) 26px,rgba(0,0,0,.035) 42px,rgba(0,0,0,0) 62px);"></div>
</div>
<div style="left:0px;top:906.5px;width:1040px;height:3px;background:#1a1a1a;"></div>
</body></html>
